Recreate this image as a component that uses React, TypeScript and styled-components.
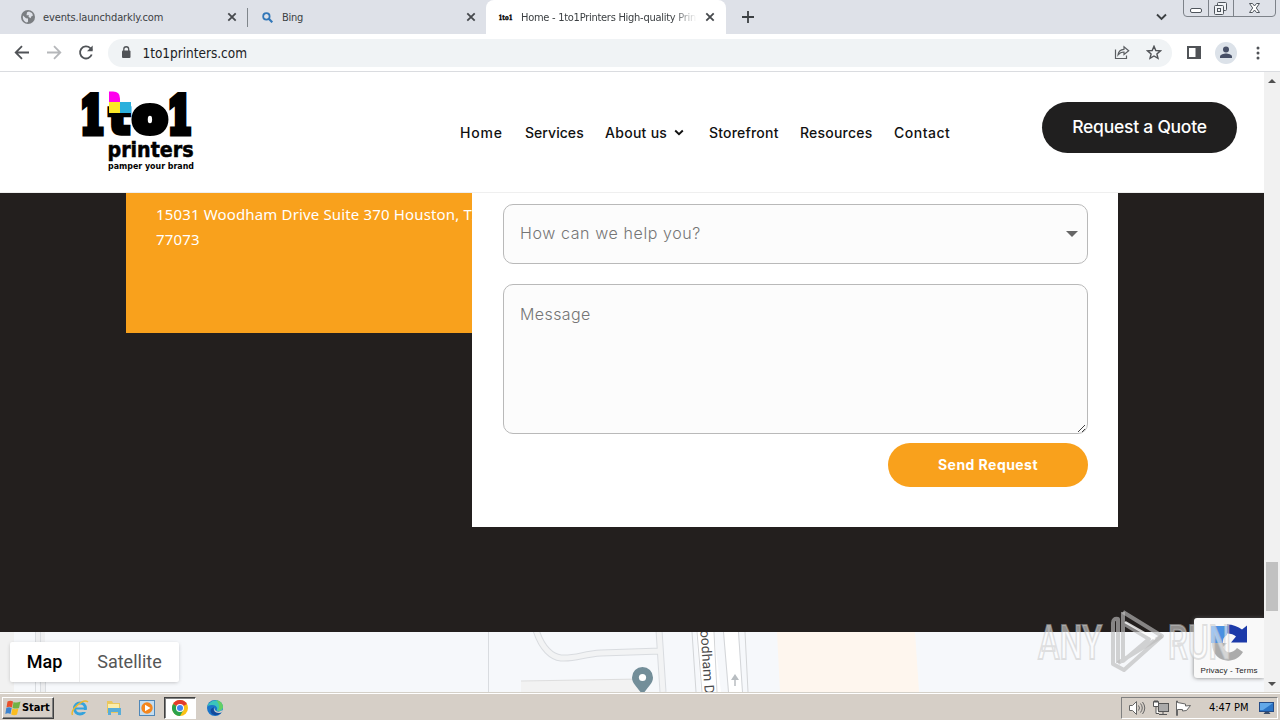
import React from "react";
import styled, { createGlobalStyle } from "styled-components";

const GlobalStyle = createGlobalStyle`
  * {
    box-sizing: border-box;
  }

  body {
    margin: 0;
    overflow: hidden;
    background: #fff;
  }

  svg {
    display: block;
    flex: none;
  }
`;

const Screen = styled.div`
  position: relative;
  display: flex;
  flex-direction: column;
  width: 1280px;
  height: 720px;
  overflow: hidden;
  font-family: "DejaVu Sans Condensed", "DejaVu Sans", sans-serif;
`;

/* ---------- browser ---------- */

const TabStrip = styled.div`
  display: flex;
  height: 34px;
  background: #dee1e8;
`;

const Tab = styled.div<{ $width: number; $left?: number; $active?: boolean }>`
  display: flex;
  align-items: center;
  width: ${(p) => p.$width}px;
  height: 34px;
  padding: 0 ${(p) => (p.$active ? 11 : 10)}px 0 ${(p) => p.$left ?? 14}px;
  border-radius: 8px 8px 0 0;
  background: ${(p) => (p.$active ? "#fff" : "transparent")};
`;

const TabTitle = styled.span<{ $gap: number; $spacing: number; $fade?: boolean }>`
  flex: 1;
  margin-left: ${(p) => p.$gap}px;
  margin-right: 8px;
  padding-top: 1px;
  overflow: hidden;
  white-space: nowrap;
  font-family: "DejaVu Sans", sans-serif;
  font-stretch: condensed;
  font-size: 11px;
  line-height: 16px;
  letter-spacing: ${(p) => p.$spacing}px;
  color: #3c4043;
  mask-image: ${(p) => (p.$fade ? "linear-gradient(90deg, #000 86%, transparent)" : "none")};
`;

const TabDivider = styled.div`
  width: 1px;
  height: 19px;
  margin-top: 8px;
  background: #80868b;
`;

const NewTab = styled.div`
  display: flex;
  align-items: center;
  padding-left: 15px;
`;

const WindowControls = styled.div`
  display: flex;
  align-items: flex-start;
  margin-left: auto;
  padding-right: 4px;
`;

const TabSearch = styled.div`
  padding: 13px 16px 0 0;
`;

const Toolbar = styled.div`
  display: flex;
  align-items: center;
  height: 38px;
  padding: 0 13px 0 14px;
  border-bottom: 1px solid #dadce0;
  background: #fff;
`;

const NavIcons = styled.div`
  display: flex;
  gap: 16px;
  width: 94px;
`;

const AddressBar = styled.div`
  display: flex;
  align-items: center;
  width: 1064px;
  height: 28px;
  padding: 0 10px 0 12px;
  border-radius: 14px;
  background: #f0f3f5;
`;

const Url = styled.span`
  flex: 1;
  margin-left: 10.5px;
  font-family: "DejaVu Sans", sans-serif;
  font-stretch: condensed;
  font-size: 13.5px;
  letter-spacing: -0.02px;
  color: #202124;
`;

const BarIcons = styled.div`
  display: flex;
  gap: 16px;
`;

const ToolIcons = styled.div`
  display: flex;
  align-items: center;
  gap: 13px;
  margin-left: 14px;
`;

const Avatar = styled.div`
  display: flex;
  width: 22px;
  height: 22px;
  border-radius: 50%;
  background: #dce2e9;
`;

const Viewport = styled.div`
  display: flex;
  height: 620px;
`;

const Page = styled.div`
  width: 1264px;
  height: 620px;
  overflow: hidden;
`;

const ScrollBar = styled.div`
  display: flex;
  flex-direction: column;
  align-items: center;
  width: 16px;
  padding: 7px 0 6px;
  background: #f1f1f1;
`;

const ScrollThumb = styled.div`
  width: 12px;
  height: 49px;
  margin: 479px 0 auto;
  background: #c1c1c1;
`;

/* ---------- site ---------- */

const Header = styled.header`
  display: flex;
  height: 121px;
  padding-left: 80px;
  border-bottom: 1px solid #efefef;
  background: #fff;
`;

const Menu = styled.nav`
  display: flex;
  gap: 22px;
  margin-left: 260px;
  padding-top: 49px;
`;

const MenuItem = styled.a<{ $width: number; $spacing: number }>`
  display: flex;
  align-items: center;
  gap: 7px;
  width: ${(p) => p.$width}px;
  height: 22px;
  white-space: nowrap;
  font-family: Inter, sans-serif;
  font-size: 14px;
  font-weight: 500;
  letter-spacing: ${(p) => p.$spacing}px;
  color: #111;
`;

const QuoteButton = styled.a`
  width: 195px;
  height: 51px;
  margin: 30px 0 0 92px;
  border-radius: 26px;
  background: #201f1f;
  text-align: center;
  font-family: Inter, sans-serif;
  font-size: 17.5px;
  font-weight: 500;
  line-height: 50px;
  letter-spacing: -0.25px;
  white-space: nowrap;
  color: #fff;
`;

const ContactSection = styled.section`
  display: flex;
  align-items: flex-start;
  height: 439px;
  padding-left: 126px;
  background: #231f1e;
`;

const AddressBox = styled.div`
  width: 346px;
  height: 140px;
  padding: 9px 0 0 30px;
  overflow: hidden;
  background: #f9a11c;
`;

const Address = styled.p`
  width: 340px;
  margin: 0;
  white-space: nowrap;
  font-family: "Noto Sans", sans-serif;
  font-size: 15px;
  line-height: 25px;
  letter-spacing: 0.15px;
  color: #fff;
`;

const Form = styled.form`
  display: flex;
  flex-direction: column;
  width: 646px;
  height: 334px;
  padding: 11px 30px 0 31px;
  background: #fff;
`;

const Field = styled.div<{ $height: number; $top: number }>`
  display: flex;
  justify-content: space-between;
  height: ${(p) => p.$height}px;
  padding: ${(p) => p.$top}px 9px 0 16px;
  margin-bottom: ${(p) => (p.$height > 100 ? 9 : 20)}px;
  border: 1px solid #b9b9b9;
  border-radius: 10px;
  background: #fcfcfc;
`;

const Placeholder = styled.span<{ $spacing: number }>`
  font-family: Inter, sans-serif;
  font-size: 16px;
  font-weight: 300;
  line-height: 24px;
  letter-spacing: ${(p) => p.$spacing}px;
  color: #757575;
`;

const SelectArrow = styled.svg`
  margin-top: 10px;
`;

const Grip = styled.svg`
  align-self: flex-end;
  margin-right: -8px;
`;

const SendButton = styled.div`
  align-self: flex-end;
  width: 200px;
  height: 44px;
  border-radius: 22px;
  background: #f9a11c;
  text-align: center;
  font-family: Inter, sans-serif;
  font-size: 14px;
  font-weight: 700;
  line-height: 43px;
  letter-spacing: 0.45px;
  color: #fff;
`;

const MapArea = styled.div`
  position: relative;
  height: 60px;
  overflow: hidden;
  background: #f6f8fb;
`;

const MapTypes = styled.div`
  position: absolute;
  top: 10px;
  left: 10px;
  display: flex;
  height: 40px;
  background: #fff;
  border-radius: 2px;
  box-shadow: 0 1px 4px -1px rgba(0, 0, 0, 0.3);
`;

const MapType = styled.div<{ $width: number; $active?: boolean }>`
  width: ${(p) => p.$width}px;
  border-right: ${(p) => (p.$active ? "1px solid #ebebeb" : "none")};
  text-align: center;
  font-family: Roboto, sans-serif;
  font-size: 18px;
  font-weight: ${(p) => (p.$active ? 500 : 400)};
  line-height: 40px;
  color: ${(p) => (p.$active ? "#000" : "#565656")};
`;

const Captcha = styled.div`
  position: absolute;
  top: 618px;
  left: 1194px;
  display: flex;
  flex-direction: column;
  align-items: center;
  width: 70px;
  height: 60px;
  padding-top: 5px;
  border-radius: 3px 0 0 3px;
  background: #f9f9f9;
  box-shadow: 0 0 4px rgba(90, 90, 90, 0.8);
  clip-path: inset(-6px 0 -6px -6px);
  font-family: "Liberation Sans", sans-serif;
  font-size: 8px;
  line-height: 11px;
  letter-spacing: 0.15px;
  white-space: nowrap;
  color: #222;
`;

const Watermark = styled.svg`
  position: absolute;
  top: 604px;
  left: 1030px;
`;

/* ---------- taskbar ---------- */

const Taskbar = styled.div`
  display: flex;
  align-items: center;
  height: 28px;
  padding: 2px 2px 0;
  border-top: 1px solid #d4d0c8;
  box-shadow: inset 0 1px #fff;
  background: #d6cfc7;
`;

const StartButton = styled.div`
  display: flex;
  align-items: center;
  gap: 1px;
  width: 52px;
  height: 22px;
  padding-left: 2px;
  border: 1px solid;
  border-color: #fff #404040 #404040 #fff;
  box-shadow: inset -1px -1px #808080;
  font-family: "DejaVu Sans", sans-serif;
  font-stretch: condensed;
  font-size: 11px;
  font-weight: 700;
  letter-spacing: -0.1px;
  color: #000;
`;

const TaskIcon = styled.div<{ $width: number; $active?: boolean }>`
  display: flex;
  align-items: center;
  justify-content: center;
  width: ${(p) => p.$width}px;
  height: 22px;
  border: ${(p) => (p.$active ? "1px solid" : "none")};
  border-color: #404040 #fff #fff #404040;
  box-shadow: ${(p) => (p.$active ? "inset 1px 1px #808080" : "none")};
  background: ${(p) => (p.$active ? "#fff" : "transparent")};
`;

const TaskIcons = styled.div`
  display: flex;
  margin-left: 9px;
`;

const Tray = styled.div`
  display: flex;
  align-items: center;
  gap: 6px;
  width: 157px;
  height: 22px;
  margin-left: auto;
  padding-left: 6px;
  border: 1px solid;
  border-color: #808080 #fff #fff #808080;
`;

const Clock = styled.span`
  width: 43px;
  margin-left: 11px;
  white-space: nowrap;
  font-family: "DejaVu Sans", sans-serif;
  font-stretch: condensed;
  font-size: 11px;
  letter-spacing: -0.05px;
  color: #000;
`;

const CloseIcon = () => (
  <svg width="10" height="10" viewBox="0 0 10 10" stroke="#46494d" strokeWidth="1.8">
    <path d="M1.3 1.3l7.4 7.4M8.7 1.3L1.3 8.7" />
  </svg>
);

const Favicon = () => (
  <svg width="16" height="12" viewBox="0 0 16 12">
    <text x="0.5" y="8.5" fontFamily="DejaVu Serif" fontWeight="700" fontSize="7" textLength="14" lengthAdjust="spacingAndGlyphs" stroke="#000" strokeWidth=".4">1to1</text>
  </svg>
);

const ChromeTabs = () => (
  <TabStrip>
    <Tab $width={247} $left={21}>
      <svg width="14" height="14" viewBox="0 0 14 14">
        <circle cx="7" cy="7" r="7" fill="#7b7e82" />
        <path d="M2 5.5l3 2.8 2 .2v3.3l-1 .8C3.3 12 1.3 9 2 5.5zM6 2.3l2-.8 3 1.6 1 2.4-1.5.8-1 2-2-1.500.5-1.500H5.500z" fill="#dee1e8" />
      </svg>
      <TabTitle $gap={8} $spacing={-0.12}>events.launchdarkly.com</TabTitle>
      <CloseIcon />
    </Tab>
    <TabDivider />
    <Tab $width={238}>
      <svg width="11" height="11" viewBox="0 0 11 11" fill="none" stroke="#3277b8" strokeWidth="1.8">
        <circle cx="4.4" cy="4.4" r="3.2" />
        <path d="M6.8 6.8l3.5 3.5" strokeWidth="2.2" />
      </svg>
      <TabTitle $gap={9} $spacing={-0.3}>Bing</TabTitle>
      <CloseIcon />
    </Tab>
    <Tab $width={240} $left={12} $active>
      <Favicon />
      <TabTitle $gap={7} $spacing={-0.27} $fade>Home - 1to1Printers High-quality Print</TabTitle>
      <CloseIcon />
    </Tab>
    <NewTab>
      <svg width="14" height="14" viewBox="0 0 14 14" stroke="#3c4043" strokeWidth="1.8">
        <path d="M7 1v12M1 7h12" />
      </svg>
    </NewTab>
    <WindowControls>
      <TabSearch>
        <svg width="11" height="8" viewBox="0 0 11 8" fill="none" stroke="#3c4043" strokeWidth="1.9">
          <path d="M1 1.500l4.500 4.500L10 1.500" />
        </svg>
      </TabSearch>
      <svg width="93" height="18" viewBox="0 0 93 18" fill="none" stroke="#7d8289">
        <path d="M.5 0v13q0 3.500 3.500 3.500h85q3.500 0 3.500-3.500V0M25.500 0v16.500M50.500 0v16.500" />
        <rect x="7.500" y="8.500" width="11" height="4" rx="1.500" stroke="#4f555c" fill="#fff" />
        <g stroke="#4f555c" fill="#f1f3f6">
          <rect x="34.500" y="2.500" width="9" height="8" rx="1" />
          <rect x="31.500" y="5.500" width="9" height="9" rx="1" />
          <rect x="34.500" y="8.500" width="3" height="3" />
        </g>
        <path d="M66.500 3.500h3l2 2.500 2-2.500h3L73.300 8l3.200 4.500h-3l-2-2.500-2 2.500h-3L69.700 8z" stroke="#4f555c" fill="#fff" />
      </svg>
    </WindowControls>
  </TabStrip>
);

const ChromeToolbar = () => (
  <Toolbar>
    <NavIcons>
      <svg width="16" height="16" viewBox="0 0 16 16" fill="none" stroke="#505357" strokeWidth="1.8">
        <path d="M15 7.500H2M8 1.200L1.700 7.500 8 13.800" />
      </svg>
      <svg width="16" height="16" viewBox="0 0 16 16" fill="none" stroke="#b5b7ba" strokeWidth="1.8">
        <path d="M1 7.500h13M8 1.200L14.300 7.500 8 13.800" />
      </svg>
      <svg width="16" height="16" viewBox="0 0 16 16" fill="none" stroke="#505357" strokeWidth="1.8">
        <path d="M13.700 9.500A6 6 0 1 1 12.300 3.200L14 5" />
        <path d="M14.700 .5v5.700H9z" fill="#505357" stroke="none" />
      </svg>
    </NavIcons>
    <AddressBar>
      <svg width="12" height="14" viewBox="0 0 12 14">
        <rect x="2" y="4.500" width="8.500" height="7.500" rx="1" fill="#505357" />
        <path d="M3.800 5V3.200a2.450 2.450 0 0 1 4.900 0V5" fill="none" stroke="#505357" strokeWidth="1.3" />
      </svg>
      <Url>1to1printers.com</Url>
      <BarIcons>
        <svg width="16" height="16" viewBox="0 0 16 16" fill="none" stroke="#5b5e62" strokeWidth="1.2">
          <path d="M1.500 4.500v9h11v-3" />
          <path d="M4 10c.3-3.500 2.500-5.500 6-5.700V1.700L14.700 5.800 10 9.500V7C7.500 7 5.700 7.800 4 10z" />
        </svg>
        <svg width="16" height="16" viewBox="0 0 16 16" fill="none" stroke="#505357" strokeWidth="1.4">
          <path d="M8 1.300l1.800 4.200 4.600.4-3.500 3 1.100 4.500-4-2.400-4 2.400 1.100-4.500-3.500-3 4.600-.4z" />
        </svg>
      </BarIcons>
    </AddressBar>
    <ToolIcons>
      <svg width="16" height="16" viewBox="0 0 16 16">
        <path d="M1 1h14v13H1zM3 3v9h6.500V3z" fill="#505357" fillRule="evenodd" />
      </svg>
      <Avatar>
        <svg width="22" height="22" viewBox="0 0 22 22" fill="#474f66">
          <circle cx="11" cy="7.500" r="3" />
          <path d="M5 16v-1.500c0-2 4-3 6-3s6 1 6 3V16z" />
        </svg>
      </Avatar>
      <svg width="16" height="16" viewBox="0 0 16 16" fill="#505357">
        <circle cx="8" cy="3" r="1.500" />
        <circle cx="8" cy="8" r="1.500" />
        <circle cx="8" cy="13" r="1.500" />
      </svg>
    </ToolIcons>
  </Toolbar>
);

const Logo = () => (
  <svg width="120" height="110" viewBox="80 72 120 110">
    <g fontFamily="DejaVu Serif" fontWeight="700" stroke="#000" strokeWidth="7" fontSize="51">
      <text transform="translate(80 132.500) scale(.7 1)">1</text>
      <text transform="translate(167.500 132.500) scale(.7 1)">1</text>
    </g>
    <g fontFamily="DejaVu Sans" fontWeight="700" stroke="#000">
      <text transform="translate(109.500 133) scale(.95 1)" fontSize="44" strokeWidth="5.500">t</text>
      <text transform="translate(133 131.500) scale(1.050 1)" fontSize="47" strokeWidth="7">o</text>
    </g>
    <path d="M107 88h25v14h-25z" fill="#fff" />
    <path d="M109 91.500h4q7 0 7 7v4h-11z" fill="#f0e" />
    <rect x="109" y="102" width="11" height="11" fill="#fde725" />
    <rect x="120" y="102" width="11" height="11" fill="#2ab0dc" />
    <g fontFamily="DejaVu Sans" fontWeight="700">
      <text x="107.500" y="157" fontSize="22" stroke="#000" strokeWidth=".6" textLength="86" lengthAdjust="spacingAndGlyphs">printers</text>
      <text x="108" y="169" fontSize="9.500" textLength="86" lengthAdjust="spacingAndGlyphs">pamper your brand</text>
    </g>
  </svg>
);

const SiteHeader = () => (
  <Header>
    <Logo />
    <Menu>
      <MenuItem $width={43} $spacing={0.85}>Home</MenuItem>
      <MenuItem $width={58} $spacing={0.05}>Services</MenuItem>
      <MenuItem $width={82} $spacing={0.28}>
        About us
        <svg width="10" height="7" viewBox="0 0 10 7" fill="none" stroke="#111" strokeWidth="1.9">
          <path d="M1.200 1.500L5 5.200l3.800-3.700" />
        </svg>
      </MenuItem>
      <MenuItem $width={69} $spacing={0.2}>Storefront</MenuItem>
      <MenuItem $width={72} $spacing={0.22}>Resources</MenuItem>
      <MenuItem $width={56} $spacing={0.5}>Contact</MenuItem>
    </Menu>
    <QuoteButton>Request a Quote</QuoteButton>
  </Header>
);

const Contact = () => (
  <ContactSection>
    <AddressBox>
      <Address>
        15031 Woodham Drive Suite 370 Houston, TX
        <br />
        77073
      </Address>
    </AddressBox>
    <Form>
      <Field $height={60} $top={16}>
        <Placeholder $spacing={0.6}>How can we help you?</Placeholder>
        <SelectArrow width="12" height="6" viewBox="0 0 12 6">
          <path d="M0 0h12L6 6z" fill="#666" />
        </SelectArrow>
      </Field>
      <Field $height={150} $top={17}>
        <Placeholder $spacing={0.4}>Message</Placeholder>
        <Grip width="9" height="9" viewBox="0 0 9 9" stroke="#444">
          <path d="M1 8l7-7M5 8l3-3" />
        </Grip>
      </Field>
      <SendButton>Send Request</SendButton>
    </Form>
  </ContactSection>
);

const StreetMap = () => (
  <MapArea>
    <svg width="1264" height="60" viewBox="0 632 1264 60" fill="none">
      <path d="M0 632h14v60H0z" fill="#f1f1f1" />
      <path d="M35 632v22l6 38h4v-60z" fill="#eeeff1" />
      <path d="M35.500 632v60M40.500 632v60M45.500 680v12M488.500 632v60" stroke="#d9dce0" />
      <path d="M521 681l121-2v13H521z" fill="#f2f2f2" />
      <path d="M521 681l121-2" stroke="#dedede" />
      <path d="M536 630c6 19 16 27 25 28 15 1 22-4 40-5l60-2M659 630l4 62" stroke="#d9dce0" strokeWidth="7" />
      <path d="M536 630c6 19 16 27 25 28 15 1 22-4 40-5l60-2M659 630l4 62" stroke="#f2f3f4" strokeWidth="5" />
      <path d="M696 632h18l7 60h-20zM724 632h14l4 60h-13z" fill="#fff" />
      <path d="M692 632l4 60M697 632l5 60M714 632l3 60M723.500 632l5 60M738.500 632l4 60M745 632l3 60" stroke="#d3d5d8" />
      <text transform="translate(699.500 618) rotate(86)" fontFamily="Roboto" fontSize="13.500" textLength="81" lengthAdjust="spacingAndGlyphs" fill="#4a4a4a">Woodham Dr</text>
      <path d="M735 686v-9" stroke="#b8bdc1" strokeWidth="1.5" />
      <path d="M731 680l4-6 4 6z" fill="#b8bdc1" />
      <path d="M777 632h138l4 60H780z" fill="#fef6ee" />
      <path d="M642.500 667a10.500 10.500 0 0 1 10.500 10.500c0 6-5 9-9.500 16h-2c-4.500-7-9.500-10-9.500-16a10.500 10.500 0 0 1 10.500-10.500z" fill="#738e99" />
      <circle cx="642.500" cy="677.500" r="3.600" fill="#fff" />
    </svg>
    <MapTypes>
      <MapType $width={70} $active>Map</MapType>
      <MapType $width={99}>Satellite</MapType>
    </MapTypes>
  </MapArea>
);

const CaptchaBadge = () => (
  <Captcha>
    <svg width="40" height="42" viewBox="0 0 40 42">
      <path d="M2 20V3h16v9a8 8 0 0 0-4 8z" fill="#4a90e2" />
      <path d="M18 1.500c6 0 11 2 15 5l5-4v17H22l5-6c-2-2-5-3-9-3z" fill="#1c3aa9" />
      <path d="M3 20h15l-4 4c3 7 9 7 14 1l6 4C26 43 3 40 3 20z" fill="#ababab" />
    </svg>
    Privacy - Terms
  </Captcha>
);

const AnyRun = () => (
  <Watermark width="210" height="76" viewBox="1030 604 210 76">
    <g fill="#fff" fillOpacity=".5" stroke="#c4c4c4" strokeOpacity=".5" strokeWidth="2" fontFamily="Roboto" fontWeight="500" fontSize="49">
      <text x="1038" y="659" textLength="64" lengthAdjust="spacingAndGlyphs">ANY</text>
      <text x="1168" y="659" textLength="63" lengthAdjust="spacingAndGlyphs">RUN</text>
    </g>
    <g fill="none" stroke="#bbb" strokeOpacity=".65" strokeWidth="4" strokeLinejoin="round">
      <path d="M1123 612l39 24-38 34-11-6V623q0-5 5-4v44" />
      <path d="M1123 612v49l26-22-26-16M1118 663l44-27" />
    </g>
    <path d="M1125 622l30 17" stroke="#fff" strokeOpacity=".8" strokeWidth="2.5" />
  </Watermark>
);

const WindowsTaskbar = () => (
  <Taskbar>
    <StartButton>
      <svg width="16" height="16" viewBox="0 0 16 16">
        <path d="M2.500 1.500q3-1.500 5.500 0L7 7.500q-2.500-1.300-5.500 0z" fill="#e8502b" />
        <path d="M8.500 2q3 1.300 7-.5L14 8q-3 1-6.500 0z" fill="#72b244" />
        <path d="M1.300 8q2.700-1.300 5.400 0l-1.200 6q-2.500-1.300-5.200 0z" fill="#3c83cf" />
        <path d="M7.400 8.500q3 1.300 6 0L12 14.500q-2.500 1.300-5.800 0z" fill="#fbbd20" />
      </svg>
      Start
    </StartButton>
    <TaskIcons>
      <TaskIcon $width={34}>
        <svg width="18" height="18" viewBox="0 0 18 18" fill="none">
          <circle cx="9" cy="9.500" r="5.500" stroke="#35a3dc" strokeWidth="3" />
          <path d="M5 9.500h9" stroke="#35a3dc" strokeWidth="2" />
          <path d="M11 12h6" stroke="#d6cfc7" strokeWidth="2" />
          <path d="M1.500 16C-1 11 12-1 17 3" stroke="#edb92e" strokeWidth="1.5" />
        </svg>
      </TaskIcon>
      <TaskIcon $width={33}>
        <svg width="18" height="18" viewBox="0 0 18 18">
          <path d="M2 2h5l1 2h7v10H2z" fill="#eac75e" />
          <path d="M3 5h11v8H3z" fill="#fbedaa" />
          <path d="M3 9h13v7h-3v-3H6v3H3z" fill="#59add8" />
        </svg>
      </TaskIcon>
      <TaskIcon $width={34}>
        <svg width="16" height="16" viewBox="0 0 16 16">
          <rect x=".5" y=".5" width="15" height="15" fill="#c4ddf0" stroke="#4f87b8" />
          <circle cx="8" cy="8" r="5.700" fill="#f4861d" />
          <path d="M6 4.800L11.500 8 6 11.200z" fill="#fff" />
        </svg>
      </TaskIcon>
      <TaskIcon $width={32} $active>
        <svg width="16" height="16" viewBox="0 0 16 16">
          <circle cx="8" cy="8" r="8" fill="#fbc116" />
          <path d="M8 8L1.070 4A8 8 0 0 1 14.930 4z" fill="#e33b2e" />
          <path d="M8 8L1.070 4A8 8 0 0 0 8 16l3.500-6z" fill="#2ba24c" />
          <circle cx="8" cy="8" r="4" fill="#fff" />
          <circle cx="8" cy="8" r="3" fill="#4285f4" />
        </svg>
      </TaskIcon>
      <TaskIcon $width={37}>
        <svg width="16" height="16" viewBox="0 0 16 16">
          <circle cx="8" cy="8" r="8" fill="#1a74c9" />
          <path d="M.5 6C3-1 15-2 16 7c0 4-4 5-6.500 3.500C12 7 7 3 .5 6z" fill="#3ac5bc" />
          <path d="M9 .2c4 .3 7 3 7 7-.5 2.500-3 3.500-5 3C13 7 12 3 9 .2z" fill="#64cf65" />
          <path d="M7 7c-2 4 2 7 7.500 5.500C9 18 2 14 4 9z" fill="#124a9c" />
          <path d="M7.500 7.500c-.5 2 1 4 4 4.200L16 10c-.2 2-2 3-4 3-4 0-6-3-4.500-5.500z" fill="#d6cfc7" />
        </svg>
      </TaskIcon>
    </TaskIcons>
    <Tray>
      <svg width="18" height="16" viewBox="0 0 18 16" fill="#fff" stroke="#666">
        <path d="M1.500 5.500h3l4-4v13l-4-4h-3z" />
        <path d="M10.500 5.500q2 2.500 0 5M12.500 3.500q3.500 4.500 0 9M14.500 2q4.500 6 0 12" fill="none" />
      </svg>
      <svg width="17" height="16" viewBox="0 0 17 16" stroke="#555" fill="#fff">
        <rect x="6.500" y="3.500" width="10" height="8" fill="#aaa" />
        <path d="M1.500 1.500h5v5h-5zM3 0v3M5 0v3M4 7v6.500h3M7 14.500h8M11 12v2" />
      </svg>
      <svg width="17" height="16" viewBox="0 0 17 16" stroke="#666" fill="#fff">
        <path d="M1.500 1v14.500h1V9.500h5v1.500l4-.5 4-5-5 .5v-2L2.500 2.500V1z" />
      </svg>
      <Clock>4:47 PM</Clock>
      <svg width="18" height="16" viewBox="0 0 18 16">
        <rect x="1.500" y="2.500" width="14" height="9" fill="#2b74c5" stroke="#244b86" />
        <path d="M2 3h13L5 10H2z" fill="#62a8e8" />
        <path d="M7 12h4l1.500 2H5.500z" fill="#3a4c68" />
      </svg>
    </Tray>
  </Taskbar>
);

const App = () => {
  return (
    <Screen>
      <GlobalStyle />
      <ChromeTabs />
      <ChromeToolbar />
      <Viewport>
        <Page>
          <SiteHeader />
          <Contact />
          <StreetMap />
        </Page>
        <ScrollBar>
          <svg width="8" height="4" viewBox="0 0 8 4" fill="#505050"><path d="M0 4l4-4 4 4z" /></svg>
          <ScrollThumb />
          <svg width="8" height="4" viewBox="0 0 8 4" fill="#505050"><path d="M0 0l4 4 4-4z" /></svg>
        </ScrollBar>
      </Viewport>
      <WindowsTaskbar />
      <CaptchaBadge />
      <AnyRun />
    </Screen>
  );
};

export default App;
